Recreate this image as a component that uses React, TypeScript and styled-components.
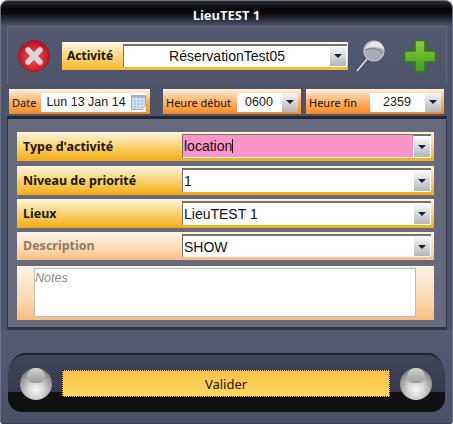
import React from 'react'
import styled, { createGlobalStyle, css } from 'styled-components'

const GlobalStyle = createGlobalStyle`
  html, body {
    margin: 0;
    padding: 0;
    background: #fff;
  }
  * {
    box-sizing: border-box;
  }
`

const Window = styled.div`
  width: 453px;
  height: 424px;
  display: flex;
  flex-direction: column;
  background: #4d5369;
  border: 1px solid #6c7288;
  border-bottom-color: #3a3f52;
  border-radius: 8px 8px 3px 3px;
  overflow: hidden;
  font-family: 'Liberation Sans', Arial, sans-serif;
`

const TitleBar = styled.div`
  height: 24px;
  flex: none;
  display: flex;
  align-items: center;
  justify-content: center;
  padding-top: 4px;
  color: #f4f4f4;
  font: bold 13px 'Noto Sans', Tahoma, sans-serif;
  background: linear-gradient(#2c2c30 0, #050505 8px, #0c0d10 13px, #4a5066 24px);
`

const TopPanel = styled.div`
  flex: none;
  height: 58px;
  margin: 1px 5px 0 6px;
  padding: 0 0 0 9px;
  display: flex;
  align-items: center;
  border: 1px solid #62687e;
  border-bottom: 0;
  background: linear-gradient(#525870, #4e546a);
`

const IconSlot = styled.div<{ $gap?: number }>`
  display: flex;
  align-items: center;
  justify-content: center;
  flex: none;
  margin-left: ${(p) => p.$gap ?? 0}px;
`

const ActivityBox = styled.div`
  width: 286px;
  height: 28px;
  margin: 0 8px 0 11px;
  padding: 2px 1px 3px 5px;
  display: flex;
  align-items: center;
  flex: none;
  background: linear-gradient(#fdf8e8 0, #fbdc90 40%, #f8b92c 100%);
  color: #1a1408;
  font: bold 12px 'Noto Sans', Tahoma, sans-serif;
`

const ActivityLabel = styled.span`
  width: 56px;
  flex: none;
`

const DateRow = styled.div`
  flex: none;
  display: flex;
  height: 32px;
  padding: 5px 8px 0 8px;
`

const OrangeField = styled.div<{ $width: number; $gap?: number }>`
  width: ${(p) => p.$width}px;
  margin-right: ${(p) => p.$gap ?? 0}px;
  height: 25px;
  flex: none;
  display: flex;
  align-items: center;
  padding: 1px 3px 0;
  font: 11px 'Noto Sans', Tahoma, sans-serif;
  color: #201408;
  background: linear-gradient(#fdf1e2 0, #fbb877 45%, #f78a1f 100%);
`

const FieldLabel = styled.span<{ $width: number }>`
  width: ${(p) => p.$width}px;
  flex: none;
  white-space: nowrap;
`

const MiniInput = styled.div<{ $width: number }>`
  width: ${(p) => p.$width}px;
  height: 19px;
  flex: none;
  display: flex;
  align-items: center;
  justify-content: flex-end;
  background: #fff;
  color: #1a1a1a;
  font: 12.5px 'Liberation Sans', Arial, sans-serif;
`

const MiniValue = styled.span`
  flex: 1;
  text-align: center;
  white-space: nowrap;
`

const MainPanel = styled.div`
  flex: none;
  height: 214px;
  margin: 0 5px 0 6px;
  padding: 13px 12px 0 9px;
  display: flex;
  flex-direction: column;
  background: #666a7c;
  border-top: 3px solid #232838;
  border-bottom: 3px solid #2f3444;
  border-left: 1px solid #2f3444;
  border-right: 1px solid #2f3444;
`

const FormRow = styled.div<{ $height: number; $gap: number; $muted?: boolean }>`
  height: ${(p) => p.$height}px;
  margin-bottom: ${(p) => p.$gap}px;
  flex: none;
  display: flex;
  align-items: center;
  padding: 2px 3px 3px 6px;
  font: bold 12.5px 'Noto Sans', Tahoma, sans-serif;
  ${(p) =>
    p.$muted
      ? css`
          color: #8e7b68;
          background: linear-gradient(#fdf3e8 0, #fcd9b2 60%, #fbbd80 100%);
        `
      : css`
          color: #1d1708;
          background: linear-gradient(#fdf6e2 0, #fbd67c 45%, #f5ab12 100%);
        `}
`

const RowLabel = styled.span`
  width: 159px;
  flex: none;
  white-space: nowrap;
`

const ComboBox = styled.div`
  flex: 1;
  height: 100%;
  display: flex;
  align-items: center;
  padding: 0 1px 0 0;
  background: #fff;
  border-top: 2px solid #77736a;
  border-left: 1px solid #77736a;
  color: #111;
  font: 14px 'Liberation Sans', Arial, sans-serif;
`

const ComboText = styled.div<{ $pink?: boolean; $center?: boolean }>`
  flex: 1;
  height: 100%;
  display: flex;
  align-items: center;
  justify-content: ${(p) => (p.$center ? 'center' : 'flex-start')};
  padding-left: 1px;
  margin-bottom: ${(p) => (p.$pink ? 3 : 0)}px;
  background: ${(p) => (p.$pink ? '#fd94c8' : 'transparent')};
  white-space: nowrap;
`

const Caret = styled.span`
  width: 1px;
  height: 14px;
  background: #111;
`

const ArrowButton = styled.div`
  width: 16px;
  height: 19px;
  margin-left: 1px;
  flex: none;
  display: flex;
  align-items: center;
  justify-content: center;
  background: linear-gradient(#f6f6f6, #d6d7d9 50%, #b4b5b8);
  &::after {
    content: '';
    border-left: 4px solid transparent;
    border-right: 4px solid transparent;
    border-top: 4px solid #14233c;
  }
`

const NotesRow = styled.div`
  height: 54px;
  flex: none;
  padding: 2px 18px 3px 17px;
  background: linear-gradient(#fdf3e8 0, #fcd9b2 60%, #fbbd80 100%);
`

const Notes = styled.div`
  width: 100%;
  height: 100%;
  background: #fff;
  border: 1px solid #bfbcbc;
  padding: 2px 0;
  color: #8a8a8a;
  font: italic 12.5px 'Liberation Sans', Arial, sans-serif;
`

const Footer = styled.div`
  flex: 1;
  display: flex;
  flex-direction: column;
  padding: 23px 0 11px 7px;
  background: linear-gradient(#545a72, #4a5066);
`

const Dock = styled.div`
  flex: 1;
  margin-right: 7px;
  display: flex;
  align-items: center;
  padding: 0 13px 0 12px;
  gap: 10px;
  border-top: 2px solid #20232e;
  border-radius: 16px 16px 14px 14px / 26px 26px 14px 14px;
  background: linear-gradient(#3f455a 0, #353a4c 37px, #101010 37px, #101010 100%);
`

const Ball = styled.div`
  position: relative;
  width: 32px;
  height: 32px;
  flex: none;
  border-radius: 50%;
  background: radial-gradient(circle at 50% 68%, #fafafa 0, #d2d2d2 32%, #8c8c8c 68%, #565656 100%);
  &::before {
    content: '';
    position: absolute;
    top: 0;
    left: 7px;
    width: 18px;
    height: 15px;
    border-radius: 9px 9px 7px 7px;
    background: linear-gradient(#d2d2d2, #9a9a9a);
  }
`

const SubmitButton = styled.button`
  width: 328px;
  height: 27px;
  flex: none;
  padding: 0;
  border: 1px dotted #111;
  color: #1c1408;
  font: 13px 'Noto Sans', Tahoma, sans-serif;
  background: linear-gradient(#fdc04a, #ffd860);
`

const CrossIcon = () => (
  <svg width="34" height="34" viewBox="0 0 34 34">
    <defs>
      <radialGradient id="redDisc" cx="50%" cy="55%" r="55%">
        <stop offset="0" stopColor="#f25a5a" />
        <stop offset="0.7" stopColor="#d9212b" />
        <stop offset="1" stopColor="#a3121b" />
      </radialGradient>
    </defs>
    <circle cx="17" cy="17" r="15.5" fill="url(#redDisc)" stroke="#8d2a30" />
    <path d="M11 11 L23 23 M23 11 L11 23" stroke="#d9d9d9" strokeWidth="5.5" strokeLinecap="round" />
  </svg>
)

const LensIcon = () => (
  <svg width="30" height="34" viewBox="0 0 30 34">
    <path d="M1 32 L11 20" stroke="#e8e8ec" strokeWidth="1.4" />
    <circle cx="18" cy="12" r="10" fill="#a9acb6" stroke="#c9c9cd" strokeWidth="1.2" />
    <path d="M9 10 Q13 2.500 19 2.500 Q26 3 27.500 10 Q18 6 9 10 Z" fill="#e8e8ea" />
    <path d="M9 11 Q18 7 27.500 14" stroke="#7f828c" strokeWidth="1" fill="none" />
  </svg>
)

const PlusIcon = () => (
  <svg width="34" height="34" viewBox="0 0 34 34">
    <defs>
      <linearGradient id="greenFill" x1="0" y1="0" x2="0" y2="1">
        <stop offset="0" stopColor="#8fcf3c" />
        <stop offset="1" stopColor="#3f9a1c" />
      </linearGradient>
    </defs>
    <path
      d="M14 1.500 H20 Q22 1.500 22 3.500 V12 H30.500 Q32.500 12 32.500 14 V21 Q32.500 23 30.500 23 H22 V31 Q22 33 20 33 H14 Q12 33 12 31 V23 H3.500 Q1.500 23 1.500 21 V14 Q1.500 12 3.500 12 H12 V3.500 Q12 1.500 14 1.500 Z"
      fill="url(#greenFill)"
      stroke="#2f7a1c"
      strokeWidth="1.5"
    />
  </svg>
)

const CalendarIcon = () => (
  <svg width="15" height="16" viewBox="0 0 15 16">
    <path d="M0.500 1.500 H14.500 V12 L11 15.500 H0.500 Z" fill="#dbe8f6" stroke="#8ea9c8" />
    <path d="M1 1.500 H14 V4 H1 Z" fill="#9db7d4" />
    <path d="M1 7 H14 M1 10 H14 M1 13 H12 M4 4 V15 M7.500 4 V15 M11 4 V15" stroke="#9db7d4" strokeWidth="0.7" />
  </svg>
)

const rows = [
  { label: "Type d'activité", value: 'location', pink: true, gap: 5 },
  { label: 'Niveau de priorité', value: '1', gap: 4 },
  { label: 'Lieux', value: 'LieuTEST 1', gap: 4 },
]

const App = () => (
  <>
    <GlobalStyle />
    <Window>
      <TitleBar>LieuTEST 1</TitleBar>
      <TopPanel>
        <IconSlot>
          <CrossIcon />
        </IconSlot>
        <ActivityBox>
          <ActivityLabel>Activité</ActivityLabel>
          <ComboBox>
            <ComboText $center>RéservationTest05</ComboText>
            <ArrowButton />
          </ComboBox>
        </ActivityBox>
        <IconSlot>
          <LensIcon />
        </IconSlot>
        <IconSlot $gap={17}>
          <PlusIcon />
        </IconSlot>
      </TopPanel>
      <DateRow>
        <OrangeField $width={141} $gap={13}>
          <FieldLabel $width={29}>Date</FieldLabel>
          <MiniInput $width={105}>
            <MiniValue>Lun 13 Jan 14</MiniValue>
            <CalendarIcon />
          </MiniInput>
        </OrangeField>
        <OrangeField $width={138} $gap={5}>
          <FieldLabel $width={71}>Heure début</FieldLabel>
          <MiniInput $width={61}>
            <MiniValue>0600</MiniValue>
            <ArrowButton />
          </MiniInput>
        </OrangeField>
        <OrangeField $width={138}>
          <FieldLabel $width={61}>Heure fin</FieldLabel>
          <MiniInput $width={71}>
            <MiniValue>2359</MiniValue>
            <ArrowButton />
          </MiniInput>
        </OrangeField>
      </DateRow>
      <MainPanel>
        {rows.map((row) => (
          <FormRow key={row.label} $height={29} $gap={row.gap}>
            <RowLabel>{row.label}</RowLabel>
            <ComboBox>
              <ComboText $pink={row.pink}>
                {row.value}
                {row.pink && <Caret />}
              </ComboText>
              <ArrowButton />
            </ComboBox>
          </FormRow>
        ))}
        <FormRow $height={28} $gap={6} $muted>
          <RowLabel>Description</RowLabel>
          <ComboBox>
            <ComboText>SHOW</ComboText>
            <ArrowButton />
          </ComboBox>
        </FormRow>
        <NotesRow>
          <Notes>Notes</Notes>
        </NotesRow>
      </MainPanel>
      <Footer>
        <Dock>
          <Ball />
          <SubmitButton>Valider</SubmitButton>
          <Ball />
        </Dock>
      </Footer>
    </Window>
  </>
)

export default App
